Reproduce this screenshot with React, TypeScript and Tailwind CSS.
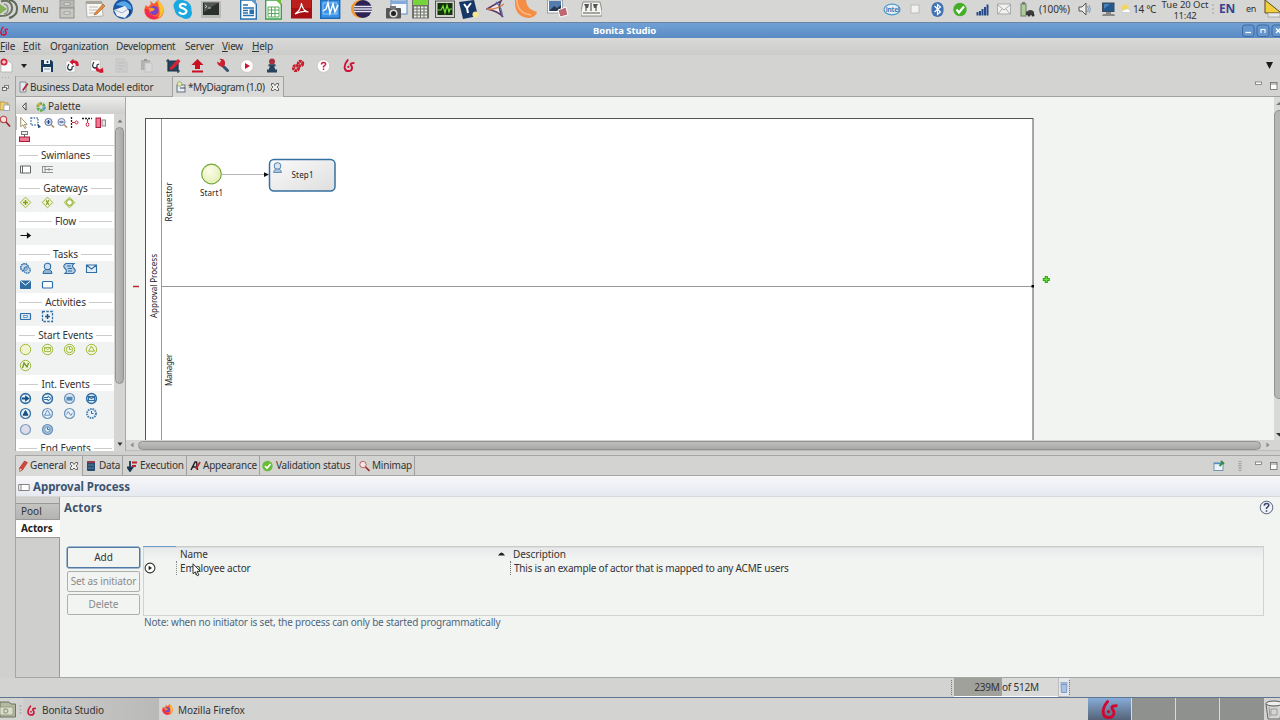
import React from "react";

type IcProps = { w: number; h: number; className?: string; children: React.ReactNode };

function Ic({ w, h, className = "", children }: IcProps) {
  return (
    <svg width={w} height={h} viewBox={`0 0 ${w} ${h}`} fill="none" className={`block shrink-0 ${className}`}>
      {children}
    </svg>
  );
}

function T({ className = "", children }: { className?: string; children: React.ReactNode }) {
  return <span className={`block shrink-0 whitespace-nowrap ${className}`}>{children}</span>;
}

function Bonita({ w, h, className = "", color = "#cf1238" }: { w: number; h: number; className?: string; color?: string }) {
  return (
    <svg width={w} height={h} viewBox="0 0 12 14" fill="none" className={`block shrink-0 ${className}`}>
      <path d="M4.600 1.200C2.600 3.500 1.200 6 1.300 9c.2 2.800 2 4 3.900 4 2.400 0 4.100-1.500 4.100-3.800 0-1.800-2.100-2.400-1.500-4 .4-.9 1.700-1 3.200-1" stroke={color} strokeWidth="2.100" strokeLinecap="round" />
      <circle cx="5.300" cy="8.500" r="1.200" fill={color} />
    </svg>
  );
}

function Firefox({ s, className = "" }: { s: number; className?: string }) {
  return (
    <svg width={s} height={s} viewBox="0 0 20 20" className={`block shrink-0 ${className}`}>
      <path d="M2 5 4 7 7 4 6 1 10 4 14 0 18 5Q22 13 16 18 9 22 3 17-2 12 2 5Z" fill="#fb5a2c" />
      <path d="M13 0q6 4 6.500 10-.5 6-6 9 3-4 2-9-1-5-2.500-10Z" fill="#ffc52e" />
      <path d="M1 9q0 8 7 10 4 .5 7-2Q5 17 4 9Z" fill="#f0285a" />
      <circle cx="10" cy="10.500" r="4.600" fill="#7a43c8" />
      <path d="M5 8q3-1 6 1l-2 2q-2 0-3 1Z" fill="#ff9a2e" />
    </svg>
  );
}

function TopPanel() {
  return (
    <div className="flex h-[22px] items-start overflow-hidden bg-[#d6d6d5] text-[10px] text-[#333]">
      <Ic w={19} h={20}>
        <path d="M0 4 7 9 0 14Z" fill="#87b158" />
        <path d="M1 1.500Q8-1 11 4q3 6-2 10-3 2-9 2" stroke="#69745f" strokeWidth="2" />
        <path d="M9 0q8 1 8 9 0 7-8 9" stroke="#5d6858" strokeWidth="2" />
        <path d="M4 4q4 1 4 5t-4 5" stroke="#8a9284" strokeWidth="1.500" />
      </Ic>
      <T className="ml-[3px] w-[37px] leading-[18px]">Menu</T>
      <Ic w={16} h={19}>
        <rect x="1" width="14" height="8" fill="#b9b9b4" stroke="#999" />
        <rect x="1" y="8" width="14" height="10" fill="#c7c7c2" stroke="#8d8d89" />
        <path d="M5 3h6v2H5zM5 12h6v2H5z" fill="#f5f5f5" stroke="#777" strokeWidth=".6" />
      </Ic>
      <Ic w={21} h={19} className="ml-[10px]">
        <path d="M1 2h16l1 14-16 1Z" fill="#f8f7f2" stroke="#999" strokeWidth=".7" />
        <path d="M1 1h16v3H1z" fill="#aaa69c" />
        <path d="M4 7h9M4 10h8M4 13h9" stroke="#aaa" strokeWidth=".8" />
        <path d="m10 13 8-9 2 2-8 8-3 1Z" fill="#e8893b" stroke="#8b4b1c" strokeWidth=".5" />
      </Ic>
      <Ic w={22} h={20} className="ml-[6px]">
        <circle cx="11" cy="9" r="10" fill="#1b57a6" />
        <path d="M4 5q8-8 15 1l1 6q-5-6-16-7Z" fill="#58a6e6" />
        <path d="M2 10 13 6l5 6-5 6-8-2Z" fill="#edf1f5" />
        <path d="m3 10 7 3 6-4" stroke="#9fb0c4" />
        <path d="m17 9 3 1-3 6Z" fill="#123c80" />
      </Ic>
      <Firefox s={20} className="ml-[10px]" />
      <Ic w={20} h={20} className="ml-[9px]">
        <circle cx="7" cy="6" r="6.500" fill="#1ba7e0" />
        <circle cx="13" cy="13" r="6" fill="#1ba7e0" />
        <circle cx="10" cy="9" r="8.500" fill="#1ba7e0" />
        <path d="M13.500 5.500Q10 2.500 7 5c-1.500 3.500 6.500 3 6.500 6.500-1 3-5 3.500-7.500.5" stroke="#fff" strokeWidth="2.200" />
      </Ic>
      <Ic w={20} h={19} className="ml-[8px]">
        <rect x="0" y="1" width="20" height="17" fill="#b8b8b4" />
        <rect x="2" y="2.500" width="16" height="12.500" fill="#2b302f" />
        <path d="M3 3h14L3 12Z" fill="#4e5553" />
        <path d="m4 5 2 1.500L4 8M7 8h3" stroke="#e5e5e5" strokeWidth=".8" />
      </Ic>
      <Ic w={17} h={20} className="ml-[19px]">
        <path d="M.7 0h11l4.600 4v15H.7Z" fill="#fff" stroke="#2671ae" strokeWidth="1.400" />
        <path d="M11 0h5v5Z" fill="#5b9bd0" />
        <path d="M3 5h5M3 8h11M3 10.500h5M3 13h5M3 15.500h11" stroke="#2671ae" strokeWidth="1.300" />
        <rect x="9.500" y="9.500" width="4.500" height="4.500" fill="#2671ae" />
      </Ic>
      <Ic w={17} h={20} className="ml-[8px]">
        <path d="M.7 0h11l4.600 4v15H.7Z" fill="#fff" stroke="#35a24a" strokeWidth="1.400" />
        <path d="M11 0h5v5Z" fill="#72bd3d" />
        <path d="M3 7h11v10H3zM3 10h11M3 13.500h11M6.500 7v10M10 7v10" stroke="#58a95a" />
      </Ic>
      <Ic w={21} h={19} className="ml-[9px]">
        <rect width="21" height="18.500" fill="#a80f12" />
        <rect x="1" y="0" width="19" height="8" fill="#bb201f" />
        <path d="M4 14Q10 10 10.500 3q1 8 7 9-6-2-13.500 2Z" stroke="#fff" strokeWidth="1.200" />
      </Ic>
      <Ic w={21} h={19} className="ml-[8px]">
        <rect x=".7" y="0" width="19" height="18.300" fill="#3a92e6" stroke="#1f68b5" strokeWidth="1.400" />
        <path d="M3 3h14v11H3z" stroke="#b9dcfa" strokeWidth=".7" />
        <path d="m3 11 3-2 2-6 2 10 3-9 2 8 3-7" stroke="#fff" strokeWidth="1.500" />
      </Ic>
      <Ic w={21} h={19} className="ml-[10px]">
        <circle cx="9" cy="9" r="9" fill="#f3992b" />
        <circle cx="12" cy="9" r="9" fill="#2c2255" />
        <path d="M3 6.500h18M3 9h18M3 11.500h18" stroke="#e6e5f0" strokeWidth="1.300" />
      </Ic>
      <Ic w={22} h={20} className="ml-[14px]">
        <rect x="5" y="0" width="16" height="14" fill="#f4f7fb" stroke="#5b89c7" />
        <path d="M5 1h16v3H5z" fill="#86aadb" />
        <rect x="0" y="8" width="15" height="10.500" rx="1" fill="#555" />
        <path d="M4 6h6v3H4z" fill="#777" />
        <circle cx="7.500" cy="13.500" r="4" fill="#ddd" />
        <circle cx="7.500" cy="13.500" r="2.500" fill="#222" />
      </Ic>
      <Ic w={19} h={19} className="ml-[3px]">
        <rect x="1" y="0" width="17" height="18.500" fill="#6e706a" />
        <rect x="2" y="0" width="15" height="5" fill="#77d33a" />
        <path d="M3 7.500h13M3 10.500h13M3 13.500h13M3 16.500h13" stroke="#ecece8" strokeWidth="2" strokeDasharray="2.500 1" />
      </Ic>
      <Ic w={20} h={19} className="ml-[5px]">
        <rect x=".5" y="1" width="19" height="16.500" fill="#d2d2cc" stroke="#555" />
        <rect x="2.500" y="3" width="15" height="12" fill="#15320f" />
        <path d="m3 10 3 0 2-4 2 7 2-8 2 7 1-3h2" stroke="#73e337" strokeWidth="1.200" />
      </Ic>
      <Ic w={21} h={20} className="ml-[4px]">
        <path d="m0 2 15-2 4 16-15 3Z" fill="#153667" />
        <path d="m5 4 3 4 4-5M8 8l1 5" stroke="#fff" strokeWidth="2" />
        <circle cx="16.500" cy="14.500" r="3" fill="#f8e58c" />
      </Ic>
      <Ic w={20} h={20} className="ml-[6px]">
        <path d="M1 9 15 1Q11 8 17 17 12 11 1 9Z" fill="#f1ece9" stroke="#593766" strokeWidth="1.500" />
        <path d="M1 9q9 1 17-5" stroke="#db813f" strokeWidth="1.500" />
        <path d="M10 2q7 7 6 15" stroke="#5272ab" strokeWidth="1.200" />
      </Ic>
      <Ic w={26} h={20} className="ml-[7px]">
        <path d="M2 0h11q0 9 11 12-1 5-8 6Q1 17 2 0Z" fill="#f68d45" />
        <path d="M4 0q0 13 14 15" stroke="#ffb985" strokeWidth="1.500" />
      </Ic>
      <Ic w={22} h={20} className="ml-[8px]">
        <rect x=".5" y="0" width="15" height="13" fill="#fff" stroke="#9ba1a8" />
        <rect x="2" y="1" width="12" height="10" fill="#547daf" />
        <path d="m2 11 5-5 3 2 4-3v6Z" fill="#273a50" />
        <path d="m11 10 8-3 2 8-8 2Z" fill="#bd6873" stroke="#fff" />
      </Ic>
      <Ic w={21} h={18} className="ml-[12px]">
        <path d="M2 2h17l2 9v5H0v-5Z" fill="#f4f4ef" stroke="#777" strokeWidth=".8" />
        <path d="M3 4h5l-1 4H5ZM12 4h5l-2 4h-2Z" fill="#555" />
        <path d="M5 7v4M10 3v8M15 7v4M2 13h17" stroke="#555" strokeWidth="1.200" />
      </Ic>

      <Ic w={18} h={19} className="ml-auto">
        <ellipse cx="9" cy="9.500" rx="8" ry="5.300" fill="#e3eef4" stroke="#499cd0" strokeWidth="1.200" />
        <text x="2.800" y="12" fontSize="6.500" fontWeight="700" fill="#347fb8" fontFamily="Noto Sans, sans-serif">intel</text>
      </Ic>
      <Ic w={10} h={18} className="ml-[9px]">
        <rect x="1" y="5" width="8" height="8" fill="#f2f2f2" stroke="#bbb" />
      </Ic>
      <Ic w={13} h={18} className="ml-[11px]">
        <rect x=".5" y="2" width="12" height="15" rx="6" fill="#3f71b3" />
        <path d="m3.500 6 6 6-3 2.500v-10l3 2.500-6 5" stroke="#fff" strokeWidth="1.200" />
      </Ic>
      <Ic w={14} h={18} className="ml-[9px]">
        <circle cx="7" cy="9.500" r="6.700" fill="#45ad28" />
        <path d="m3.500 9.500 2.500 3 5-6" stroke="#fff" strokeWidth="2.200" />
      </Ic>
      <Ic w={13} h={18} className="ml-[9px]">
        <path d="M1.500 12v3.500M4 11v4.500M6.500 9v6.500M9 7v8.500M11.500 4.500v11" stroke="#284b89" strokeWidth="2" />
      </Ic>
      <Ic w={14} h={18} className="ml-[8px]">
        <rect x=".5" y="4" width="13" height="10" fill="#f2f2f2" stroke="#aaa" />
        <path d="m1 5 6 5 6-5M1 14l4-5M13 14 9 9" stroke="#aaa" />
      </Ic>
      <Ic w={15} h={18} className="ml-[9px]">
        <rect x="1" y="4" width="5" height="12" fill="#a9cf94" stroke="#777" />
        <path d="M2 2h3v2H2z" fill="#777" />
        <path d="M6 12q5-4 8 0v3H6Z" fill="#3c3e3c" />
        <circle cx="9" cy="15" r="1.500" fill="#333" />
        <circle cx="13" cy="15" r="1.500" fill="#333" />
      </Ic>
      <T className="ml-[4px] w-[39px] leading-[18px] tracking-[-0.1px]">(100%)</T>
      <Ic w={13} h={18}>
        <path d="M1 7h3l4-4v12l-4-4H1Z" fill="#ededeb" stroke="#555" />
        <path d="M9.500 6q2 3 0 6M11 5q3 4 0 8" stroke="#7d98bb" />
      </Ic>
      <Ic w={15} h={18} className="ml-[10px]">
        <rect x="1.500" y="3" width="11.500" height="8.500" fill="#23588f" stroke="#3a4b5c" />
        <path d="M3 4h6L3 9Z" fill="#4a80b8" />
        <path d="M5 12h5v2h3l1 2H1l1-2h3Z" fill="#888" />
      </Ic>
      <Ic w={10} h={18} className="ml-[5px]">
        <circle cx="4" cy="8" r="3.500" fill="#f3d75d" />
        <path d="M1 12.500q0-3 3-3 3-2 5 1 1 2-1 2Z" fill="#fff" stroke="#bbb" strokeWidth=".5" />
      </Ic>
      <T className="ml-[2px] w-[27px] leading-[18px] tracking-[-0.300px]">14 °C</T>
      <div className="flex h-[22px] w-[50px] shrink-0 flex-col items-center text-[9.500px] whitespace-nowrap">
        <span className="-mt-px h-[11px] leading-[11px] tracking-[-0.050px]">Tue 20 Oct</span>
        <span className="h-[11px] leading-[11px]">11:42</span>
      </div>
      <Ic w={4} h={18} className="ml-[1px]">
        <path d="M2 4v11" stroke="#bbb" strokeWidth="2" strokeDasharray="2 2" />
      </Ic>
      <T className="ml-[4px] w-[27px] text-[12px] leading-[18px] font-bold text-[#3d4390]">EN</T>
      <T className="w-[18px] text-[9px] leading-[18px]">en</T>
      <Ic w={16} h={20}>
        <path d="M1 0v13h15" fill="#f2cf3b" stroke="#5a4b16" />
        <path d="m1 0 15 12" stroke="#5a4b16" />
        <path d="M4 13h12v4H4z" fill="#e8e8e8" stroke="#888" strokeWidth=".6" />
      </Ic>
    </div>
  );
}

function TitleBar() {
  return (
    <div className="flex h-[16px] items-center border-t border-[#6c84a0] bg-gradient-to-b from-[#70a0d5] to-[#5a8bc4]">
      <Bonita w={8} h={10} />
      <T className="ml-[585px] w-[64px] text-[9.500px] leading-[14px] font-bold tracking-[-0.050px] text-white">Bonita Studio</T>
      <Ic w={38} h={14} className="ml-auto">
        <rect x="0.500" y="1" width="11.500" height="11.500" rx="2.500" stroke="#41699b" fill="#6496cf" />
        <rect x="15" y="1" width="12" height="11.500" rx="2.500" stroke="#41699b" fill="#6496cf" />
        <rect x="30" y="1" width="12" height="11.500" rx="2.500" stroke="#41699b" fill="#6496cf" />
        <path d="M3.500 8.500h5.500" stroke="#fff" strokeWidth="1.300" />
        <path d="M19 9V5.500h4V9" stroke="#fff" strokeWidth="1.100" />
        <path d="m34 4.500 4.500 4.500m0-4.500L34 9" stroke="#fff" strokeWidth="1.300" />
      </Ic>
    </div>
  );
}

function MenuBar() {
  return (
    <div className="flex h-[17px] items-center bg-gradient-to-b from-[#d9d9d8] to-[#cbcbca] text-[10px] text-[#333]">
      <T className="w-[23px]"><u>F</u>ile</T>
      <T className="w-[27px] tracking-[0px]"><u>E</u>dit</T>
      <T className="w-[66px]">Organization</T>
      <T className="w-[69px] tracking-[-0.330px]">Development</T>
      <T className="w-[37px]">Server</T>
      <T className="w-[30px]"><u>V</u>iew</T>
      <T><u>H</u>elp</T>
    </div>
  );
}

function ToolBar() {
  return (
    <div className="flex h-[22px] items-center border-b border-[#b2b2b2] bg-[#d3d3d2]">
      <Ic w={14} h={16}>
        <path d="M1 3h8l3 3v8H1Z" fill="#fafafa" stroke="#aaa" strokeWidth=".7" />
        <circle cx="4" cy="4" r="3.500" fill="#d6293b" />
        <path d="M4 2v4M2 4h4" stroke="#fff" />
      </Ic>
      <Ic w={6} h={4} className="ml-[7px]"><path d="M0 0h6L3 4Z" fill="#222" /></Ic>
      <Ic w={14} h={14} className="ml-[13px]">
        <path d="M1 1h10l2 2v10H1Z" fill="#173b5c" />
        <path d="M4 1h6v4H4zM3 8h8v5H3z" fill="#eef1f4" />
        <path d="M7.500 2v2" stroke="#173b5c" strokeWidth="1.500" />
        <path d="M4 10h6" stroke="#8899a8" />
      </Ic>
      <Ic w={14} h={16} className="ml-[11px]">
        <path d="M1 3h9v11H1Z" fill="#fff" stroke="#bbb" strokeWidth=".6" />
        <path d="M4 6q-2 3-1 5 2 2 4 0V9l2-1" stroke="#253441" strokeWidth="1.200" />
        <path d="M13.500 8q1-6-5-5.500V.8L4.500 4 8 7V5.200q3-.7 3 2.800Z" fill="#d5152f" />
      </Ic>
      <Ic w={14} h={16} className="ml-[11px]">
        <path d="M1 2h9v11H1Z" fill="#fff" stroke="#bbb" strokeWidth=".6" />
        <path d="M4 4q-2 3-1 5 2 2 4 0V7l2-1" stroke="#253441" strokeWidth="1.200" />
        <path d="M5.500 9.500q0 5 4 4.200V15l4-.5-.7-5-1.500 1.200q-1 1-2.500.5l-.5-1.700Z" fill="#d5152f" />
      </Ic>
      <Ic w={13} h={15} className="ml-[11px]">
        <path d="M1 1h8l3 3v10H1Z" fill="#cdcdcd" stroke="#c4c4c4" />
        <path d="M3 5h7M3 8h7M3 11h5" stroke="#bdbdbd" />
      </Ic>
      <Ic w={13} h={15} className="ml-[12px]">
        <path d="M1 2h9v10H1Z" fill="#b2b2b2" />
        <path d="M4 1h3v2H4z" fill="#999" />
        <path d="M5 5h7v9H5z" fill="#d9d9d9" stroke="#c4c4c4" />
      </Ic>
      <Ic w={15} h={16} className="ml-[13px]">
        <rect x="2" y="3" width="10" height="10" fill="#25445e" />
        <path d="M2 1v12h12M0 3h12v12" stroke="#19324a" strokeWidth="1.200" />
        <path d="M3.500 12 4.500 9 12 1l2.500 2.200L7 11Z" fill="#d92332" />
      </Ic>
      <Ic w={13} h={16} className="ml-[10px]">
        <path d="m6.500 1 6 6H9v4H4V7H.5ZM1 12.500h11v2H1Z" fill="#c9101f" />
      </Ic>
      <Ic w={14} h={15} className="ml-[12px]">
        <path d="m6 7 5.500 5.500" stroke="#36536d" strokeWidth="3" strokeLinecap="round" />
        <path d="M1 3.500 4 5l1-3-2-1q5-1 6 3v2.500L6.500 9q-5-1-5.500-5.500Z" fill="#cc1f30" />
      </Ic>
      <Ic w={14} h={14} className="ml-[10px]">
        <circle cx="7" cy="7" r="6.400" fill="#fff" stroke="#ccb6b8" strokeWidth=".7" />
        <path d="M5 4v6l5-3Z" fill="#cf152d" />
      </Ic>
      <Ic w={12} h={15} className="ml-[12px]">
        <circle cx="6" cy="3.500" r="3" fill="#a8313c" />
        <path d="M2.500 6.200h7v2H8.200l1 3.300h1.800v3H1v-3h1.800l1-3.300H2.500Z" fill="#27445e" />
      </Ic>
      <Ic w={14} h={14} className="ml-[13px]">
        <circle cx="9.500" cy="4.500" r="2.200" stroke="#c61c2c" strokeWidth="3" strokeDasharray="2.200 .5" />
        <circle cx="5" cy="9" r="2.500" stroke="#c61c2c" strokeWidth="3.200" strokeDasharray="2.400 .5" />
      </Ic>
      <Ic w={14} h={14} className="ml-[12px]">
        <circle cx="6.500" cy="7" r="6.300" fill="#fff" stroke="#c9bbbd" strokeWidth=".7" />
        <path d="M4.500 5.500q0-2 2-2 2.500 0 2 2Q8 6.500 6.500 7.500v1M6.500 9.500v1.500" stroke="#c41b3d" strokeWidth="1.500" />
      </Ic>
      <Bonita w={12} h={13} className="ml-[12px]" />
      <Ic w={7} h={7} className="mr-[7px] ml-auto"><path d="M0 0h7L3.500 7Z" fill="#1c1c1c" /></Ic>
    </div>
  );
}

function CloseX({ className = "" }: { className?: string }) {
  return (
    <Ic w={8} h={8} className={className}>
      <path d="M.5.5h2L4 2.500 5.500.5h2v2L6 4l1.500 1.500v2h-2L4 6 2.500 7.500h-2v-2L2 4 .5 2.500Z" fill="#eee" stroke="#444" strokeWidth=".8" />
    </Ic>
  );
}

function MinMax() {
  return (
    <Ic w={25} h={10} className="ml-auto">
      <rect x="0.500" y="1" width="6" height="2.500" fill="#fff" stroke="#777" strokeWidth=".8" />
      <rect x="15.500" y="1.500" width="6.500" height="7" fill="#fff" stroke="#666" strokeWidth=".8" />
      <path d="M15.500 3h6.500" stroke="#666" strokeWidth=".8" />
    </Ic>
  );
}

function EditorTabs() {
  return (
    <div className="flex h-[21px] bg-[#d3d3d2] text-[10px] text-[#333]">
      <div className="flex w-[15px] shrink-0 flex-col items-start">
        <Ic w={14} h={20}>
          <path d="M2 1.500h9" stroke="#aaa" strokeDasharray="1 2" />
          <rect x="4.500" y="9.500" width="4" height="3" fill="#eee" stroke="#666" strokeWidth=".8" />
          <rect x="2.500" y="11.500" width="4" height="3" fill="#eee" stroke="#555" strokeWidth=".8" />
        </Ic>
      </div>
      <div className="flex flex-1 items-center border-b border-l border-[#a0a0a0]">
        <div className="flex h-full w-[156px] shrink-0 items-center border-t border-[#bbb] pt-[1px] pl-[3px]">
          <Ic w={10} h={12}>
            <path d="M1 1h6v10H1Z" fill="#e6eaf0" stroke="#6b7683" strokeWidth=".8" />
            <path d="m3 9 5-7 1.500 1-5 7Z" fill="#b02735" />
          </Ic>
          <T className="ml-[1px]">Business Data Model editor</T>
        </div>
        <div className="flex h-[21px] w-[112px] shrink-0 items-center self-start border-x border-t border-[#a0a0a0] bg-[#dadad9] pl-[3px]">
          <Ic w={10} h={12}>
            <rect x="1" y="4" width="8" height="7" fill="#e9edf2" stroke="#567" strokeWidth=".9" />
            <circle cx="3.500" cy="3" r="2.300" fill="#e6ecb0" stroke="#8f9a4c" strokeWidth=".7" />
            <path d="M4 7h5" stroke="#345" />
          </Ic>
          <T className="ml-[2px] w-[83px] tracking-[-0.400px]">*MyDiagram (1.0)</T>
          <CloseX />
        </div>
        <MinMax />
      </div>
    </div>
  );
}

const G = "#9db93f";
const B = "#2f6da5";

const Shapes: Record<string, React.ReactNode> = {
  pool: <path d="M1.500 3h10v7h-10zM3.500 3v7" stroke="#555" fill="#fff" strokeWidth=".9" />,
  lane: <path d="M1 3.500h11M1 9.500h11M1.500 3v7M4 3v7M4 6.500h8M8 5v3" stroke="#888" strokeWidth=".9" />,
  gplus: <><path d="m6.500 1.200 5.300 5.300-5.300 5.300-5.300-5.300Z" fill="#eef3cf" stroke={G} /><path d="M6.500 4v5M4 6.500h5" stroke="#809c25" strokeWidth="1.400" /></>,
  gx: <><path d="m6.500 1.200 5.300 5.300-5.300 5.300-5.300-5.300Z" fill="#eef3cf" stroke={G} /><path d="m5.200 4.200 2.600 4.600M7.800 4.200 5.200 8.800" stroke="#809c25" strokeWidth="1.200" /></>,
  gcirc: <><path d="m6.500 1.200 5.300 5.300-5.300 5.300-5.300-5.300Z" fill="#dfe9a8" stroke={G} /><circle cx="6.500" cy="6.500" r="2.900" fill="#fff" stroke={G} strokeWidth="1.200" /></>,
  arrow: <path d="M1.500 6.500h8M8.500 4.500l2.700 2-2.700 2Z" stroke="#111" fill="#111" strokeWidth="1.200" />,
  gear: <><circle cx="5.500" cy="5.500" r="3.800" stroke={B} strokeWidth="1.500" strokeDasharray="1.700 .6" fill="#c8dbec" /><circle cx="8" cy="8" r="3.200" stroke={B} strokeWidth="1.300" strokeDasharray="1.600 .6" fill="#c8dbec" /><circle cx="7" cy="7" r="1.300" fill="#fff" stroke={B} strokeWidth=".8" /></>,
  user: <><circle cx="6.500" cy="4.500" r="3.200" fill="#cfdfee" stroke={B} strokeWidth="1.100" /><path d="M2 11.500q0-3 2.500-4h4q2.500 1 2.500 4Z" fill="#8fb3d3" stroke={B} /></>,
  script: <path d="M3 1.500h8q-3 2.500 0 5t-1 5H2q3-2.500 0-5t1-5ZM4 4h4M5 6.500h4M5 9h4" fill="#b7d0e6" stroke={B} strokeWidth="1.100" />,
  mail: <path d="M1.500 3h10v7.500h-10zM1.500 3l5 4 5-4" fill="#e3edf6" stroke={B} strokeWidth="1.100" />,
  mailf: <><path d="M1.500 3h10v7.500h-10z" fill={B} stroke={B} /><path d="m1.500 3 5 4 5-4" stroke="#fff" /></>,
  rect: <rect x="1.500" y="3.500" width="10" height="6.500" rx="1" fill="#fff" stroke={B} strokeWidth="1.200" />,
  act: <><rect x="1.500" y="3.500" width="10" height="6" rx=".7" fill="#dbe7f2" stroke={B} strokeWidth="1.200" /><rect x="4.800" y="5.500" width="3.400" height="2" fill="#fff" stroke={B} strokeWidth=".7" /></>,
  sub: <><rect x="1.500" y="1.500" width="10" height="10" stroke={B} strokeWidth="1.300" strokeDasharray="2.500 1.300" /><path d="M6.500 4v5M4 6.500h5" stroke="#205b95" strokeWidth="1.600" /></>,
  start: <circle cx="6.500" cy="6.500" r="5.200" fill="#f2f4cd" stroke={G} />,
  smail: <><circle cx="6.500" cy="6.500" r="5.200" fill="#f2f5dc" stroke={G} /><path d="M3.500 4.500h6v4h-6zl3 2 3-2" stroke={G} strokeWidth=".9" /></>,
  stime: <><circle cx="6.500" cy="6.500" r="5.200" fill="#f2f5dc" stroke={G} /><circle cx="6.500" cy="6.500" r="3.200" stroke={G} /><path d="M6.500 4v2.500h2" stroke={G} /></>,
  ssig: <><circle cx="6.500" cy="6.500" r="5.200" fill="#f2f5dc" stroke={G} /><path d="m6.500 3 3 5.200h-6Z" stroke={G} /></>,
  serr: <><circle cx="6.500" cy="6.500" r="5.200" fill="#f2f5dc" stroke={G} /><path d="m3.500 9 1.500-5 3 4L9.500 4" stroke="#6f9620" strokeWidth="1.300" /></>,
  iarr: <><circle cx="6.500" cy="6.500" r="4.900" fill="#e9f1f8" stroke={B} strokeWidth="1.600" /><path d="M3 6.500h4.500M7 5l2 1.500L7 8Z" stroke="#174f80" fill="#174f80" strokeWidth="1.800" /></>,
  iarro: <><circle cx="6.500" cy="6.500" r="4.900" fill="#e9f1f8" stroke={B} strokeWidth="1.600" /><path d="M3 5.500h4V4l3 2.500L7 9V7.500H3" stroke={B} /></>,
  imsg: <><circle cx="6.500" cy="6.500" r="5" fill="#dce8f3" stroke="#6792bb" strokeWidth="1.200" /><rect x="3.500" y="4.800" width="6" height="3.800" fill="#5688b6" /></>,
  imail: <><circle cx="6.500" cy="6.500" r="4.900" fill="#dce8f3" stroke={B} strokeWidth="1.500" /><path d="M3.500 4.500h6v4h-6zl3 2 3-2" stroke={B} strokeWidth="1.100" /></>,
  isig: <><circle cx="6.500" cy="6.500" r="5" fill="#e9f1f8" stroke={B} strokeWidth="1.200" /><path d="m6.500 3.500 2.500 4.700h-5Z" fill="#174f80" stroke="#174f80" /></>,
  isigo: <><circle cx="6.500" cy="6.500" r="5" fill="#e9f1f8" stroke="#6792bb" strokeWidth="1.200" /><path d="m6.500 3 3 5.200h-6Z" stroke="#6792bb" /></>,
  ierr: <><circle cx="6.500" cy="6.500" r="5" fill="#e9f1f8" stroke="#6792bb" strokeWidth="1.200" /><path d="m3.500 7.500 1.800-3 2.500 4L9.500 6" stroke="#6792bb" /></>,
  itime: <><circle cx="6.500" cy="6.500" r="4.500" fill="#e9f1f8" stroke="#4f82b2" strokeWidth="2" strokeDasharray="1.600 .8" /><path d="M6.500 4v2.500h2" stroke={B} /></>,
  inone: <circle cx="6.500" cy="6.500" r="5" fill="#dcdcec" stroke="#7d9cc0" strokeWidth="1.200" />,
  iclock: <><circle cx="6.500" cy="6.500" r="5" fill="#aac4dd" stroke="#6792bb" strokeWidth="1.200" /><circle cx="6.500" cy="6.500" r="2.700" fill="#e9f1f8" stroke="#6792bb" /><path d="M6.500 4.500v2h2" stroke={B} /></>,
};

function Section({ title, rows }: { title: string; rows: string[][] }) {
  return (
    <div className="shrink-0">
      <div className="flex h-[16px] items-center pt-[3px] pr-[2px] pl-[3px]">
        <div className="h-px flex-1 bg-[#cbcbcb]" />
        <T className="px-[3px] text-[10px] leading-[13px] tracking-[-0.100px] text-[#333]">{title}</T>
        <div className="h-px flex-1 bg-[#cbcbcb]" />
      </div>
      <div className="bg-[#f1f3f2] pb-[1.300px]">
        {rows.map((r, i) => (
          <div key={i} className="flex h-[15.600px] items-center gap-[9px] pl-[3px]">
            {r.map((k) => (
              <Ic key={k} w={13} h={13}>{Shapes[k]}</Ic>
            ))}
          </div>
        ))}
      </div>
    </div>
  );
}

function Palette() {
  return (
    <div className="flex w-[111px] shrink-0 flex-col border-x border-[#a9a9a9] bg-white">
      <div className="flex h-[17px] shrink-0 items-center bg-gradient-to-b from-[#ececeb] to-[#cfcfce] pt-[2px] pl-[5px] text-[10px] text-[#333]">
        <Ic w={6} h={9}><path d="M5 .8v7.400L1.500 4.500Z" fill="#eee" stroke="#333" strokeWidth=".9" /></Ic>
        <Ic w={10} h={10} className="ml-[9px]">
          <circle cx="5" cy="5" r="3.300" stroke="#5fae4b" strokeWidth="2.800" strokeDasharray="2.600 .8" />
          <path d="M1.500 3.500 4 1.500" stroke="#e2a83a" strokeWidth="2.500" />
          <path d="m7 8 2-3" stroke="#58a3cf" strokeWidth="2.500" />
        </Ic>
        <T className="ml-[2px] tracking-[0px]">Palette</T>
      </div>
      <div className="flex min-h-0 flex-1">
        <div className="flex w-[98px] shrink-0 flex-col overflow-hidden">
          <div className="h-[32px] shrink-0 border-b border-[#cfcfcf] pt-[1px]">
            <div className="flex h-[15px] items-center">
              <Ic w={13} h={14} className="border-l border-[#bbb]">
                <path d="M4 1v10l2.500-2 2 4 1.500-1-2-3.500h3Z" fill="#fff" stroke="#8c8352" strokeWidth=".9" />
              </Ic>
              <Ic w={13} h={13}>
                <path d="M2 2h7v7H2z" stroke="#4a78a8" strokeWidth="1.400" strokeDasharray="1.500 1.200" />
                <path d="M9 8v4l3-1Z" fill="#1d456e" />
              </Ic>
              <Ic w={13} h={13}>
                <circle cx="6.500" cy="6" r="3.600" fill="#dbe5f4" stroke="#5d6fa0" />
                <path d="M4.500 6h4M6.500 4v4" stroke="#2f4680" strokeWidth="1.200" />
                <path d="m9.500 9 2.500 2.500" stroke="#b08b54" strokeWidth="1.600" />
              </Ic>
              <Ic w={13} h={13}>
                <circle cx="6.500" cy="6" r="3.600" fill="#dbe5f4" stroke="#7683a6" />
                <path d="M4.500 6h4" stroke="#2f4680" strokeWidth="1.200" />
                <path d="m9.500 9 2.500 2.500" stroke="#b08b54" strokeWidth="1.600" />
              </Ic>
              <Ic w={13} h={13}>
                <path d="M3.500 1v11" stroke="#222" strokeWidth="1.300" strokeDasharray="2 1" />
                <path d="M4 6.500h3" stroke="#c33" />
                <circle cx="8.500" cy="6.500" r="1.500" stroke="#c4264c" />
              </Ic>
              <Ic w={13} h={13}>
                <path d="M1 2.500h10" stroke="#222" strokeWidth="1.300" strokeDasharray="2 1" />
                <path d="M6.500 3v3" stroke="#c33" />
                <ellipse cx="6.500" cy="8.500" rx="1.300" ry="2" stroke="#c4264c" />
              </Ic>
              <Ic w={13} h={13}>
                <rect x="2" y="2" width="4.500" height="9.500" fill="#f07891" stroke="#a91a3a" />
                <rect x="8" y="4" width="3.500" height="6" fill="#e6e6e6" stroke="#888" />
              </Ic>
            </div>
            <Ic w={13} h={13} className="ml-[2px]">
              <rect x="3.500" y="1.500" width="6" height="3" fill="#eee" stroke="#777" />
              <rect x="1.500" y="7" width="10" height="4.500" fill="#f07891" stroke="#a91a3a" />
              <path d="M6.500 5v2" stroke="#555" />
            </Ic>
          </div>
          <Section title="Swimlanes" rows={[["pool", "lane"]]} />
          <Section title="Gateways" rows={[["gplus", "gx", "gcirc"]]} />
          <Section title="Flow" rows={[["arrow"]]} />
          <Section title="Tasks" rows={[["gear", "user", "script", "mail"], ["mailf", "rect"]]} />
          <Section title="Activities" rows={[["act", "sub"]]} />
          <Section title="Start Events" rows={[["start", "smail", "stime", "ssig"], ["serr"]]} />
          <Section title="Int. Events" rows={[["iarr", "iarro", "imsg", "imail"], ["isig", "isigo", "ierr", "itime"], ["inone", "iclock"]]} />
          <Section title="End Events" rows={[["start"]]} />
        </div>
        <div className="flex flex-1 flex-col items-center bg-[#d5d5d4]">
          <Ic w={8} h={13}><path d="M1.500 8.500h5L4 5.500Z" fill="#777" /></Ic>
          <div className="h-[257px] w-[9px] rounded-[5px] border border-[#929292] bg-gradient-to-r from-[#bdbdbc] to-[#a9a9a8]" />
          <div className="flex-1" />
          <Ic w={8} h={12}><path d="M1.500 3.500h5L4 7Z" fill="#333" /></Ic>
        </div>
      </div>
    </div>
  );
}

function Diagram() {
  return (
    <svg width="1148" height="343" viewBox="126 97 1148 343" fill="none" className="block" fontFamily="Noto Sans, sans-serif">
      <defs>
        <linearGradient id="task" x1="0" y1="0" x2="1" y2="1">
          <stop offset="0" stopColor="#fbfbfb" />
          <stop offset="1" stopColor="#dedede" />
        </linearGradient>
        <radialGradient id="ev" cx=".4" cy=".35" r=".7">
          <stop offset="0" stopColor="#fdfee8" />
          <stop offset="1" stopColor="#e3edb4" />
        </radialGradient>
      </defs>
      <rect x="145.500" y="118.500" width="887.500" height="340" fill="#fff" stroke="#555" />
      <path d="M161.500 119v322" stroke="#999" />
      <path d="M162 286.500h871" stroke="#999" />
      <rect x="1031.500" y="285" width="2.500" height="2.500" fill="#000" />
      <path d="M133 286.500h6" stroke="#c0272d" strokeWidth="1.500" />
      <path d="M1046.300 276v7M1042.800 279.500h7" stroke="#2fa516" strokeWidth="3.200" />
      <path d="M1046.300 277v5M1043.800 279.500h5" stroke="#6ee23f" strokeWidth="1.200" />
      <path d="M222 174.500h43" stroke="#b5b5b5" />
      <path d="M264 172.300v4.600l5-2.300Z" fill="#111" />
      <circle cx="211.500" cy="174" r="9.800" fill="url(#ev)" stroke="#74a83a" strokeWidth="1.200" />
      <rect x="269.500" y="159.500" width="65.500" height="31.500" rx="4.500" fill="url(#task)" stroke="#34709f" strokeWidth="1.500" />
      <circle cx="277.500" cy="166" r="3.200" fill="#dbe6f0" stroke="#6691b7" strokeWidth="1.100" />
      <path d="M273.500 172.500q.5-3 2.500-3.500h3q2 .5 2.500 3.500Z" fill="#a9c3da" stroke="#6691b7" />
      <g fontSize="8" fill="#222" letterSpacing="0">
        <text x="302.500" y="178" textAnchor="middle" textLength="22">Step1</text>
        <text x="211.500" y="195.500" textAnchor="middle" textLength="23">Start1</text>
        <text transform="translate(172 202) rotate(-90)" textAnchor="middle" textLength="39">Requestor</text>
        <text transform="translate(172 370) rotate(-90)" textAnchor="middle" textLength="32">Manager</text>
        <text transform="translate(157 286) rotate(-90)" textAnchor="middle" textLength="64">Approval Process</text>
      </g>
    </svg>
  );
}

function LeftTrim() {
  return (
    <div className="flex w-[15px] shrink-0 flex-col bg-[#d0d0cf]">
      <Ic w={12} h={14} className="mt-[2px]">
        <path d="M0 3h4l1 1h3v7H0Z" fill="#f0cf70" stroke="#a58a45" strokeWidth=".8" />
        <rect x="4" y="6" width="5.500" height="5.500" fill="#fff" stroke="#8e9db0" strokeWidth=".8" />
      </Ic>
      <Ic w={12} h={14} className="mt-[2px]">
        <circle cx="3.500" cy="4.500" r="3.200" fill="#f4dede" stroke="#b84444" strokeWidth="1.100" />
        <path d="m6 7 4 4.500" stroke="#992c2c" strokeWidth="1.800" />
      </Ic>
    </div>
  );
}

function Editor() {
  return (
    <div className="flex h-[354px]">
      <LeftTrim />
      <Palette />
      <div className="flex min-w-0 flex-1 flex-col bg-[#f2f4f2]">
        <div className="flex h-[343px]">
          <Diagram />
          <div className="flex flex-1 flex-col overflow-hidden bg-[#d9d9d8]">
            <Ic w={8} h={13}><path d="M2 8h7L5.500 5Z" fill="#777" /></Ic>
            <div className="h-[289px] w-[11px] rounded-[5px] border border-[#929292] bg-[#b6b6b5]" />
            <div className="flex-1" />
            <Ic w={8} h={11}><path d="M2 4h7L5.500 7.500Z" fill="#333" /></Ic>
          </div>
        </div>
        <div className="flex h-[11px] items-center border-b border-[#bbb] bg-[#d5d5d4]">
          <Ic w={12} h={10}><path d="M7.500 2.500v5L4.500 5Z" fill="#888" /></Ic>
          <div className="h-[9px] w-[1123px] rounded-[5px] border border-[#929292] bg-gradient-to-b from-[#bdbdbc] to-[#a9a9a8]" />
          <Ic w={12} h={10}><path d="M5.500 2.500v5l3-2.500Z" fill="#888" /></Ic>
        </div>
      </div>
    </div>
  );
}

function ViewTabs() {
  return (
    <div className="flex h-[21px] items-stretch border-t border-b border-[#a6a6a6] bg-[#d3d3d2] text-[10px] text-[#333]">
      <div className="-mb-px flex w-[67px] items-center border-r border-[#a0a0a0] bg-[#dadad9] pb-[1px] pl-[2px]">
        <Ic w={11} h={12}>
          <path d="m1.500 8 5-7 3 1.500-5 7.500-3 1.500Z" fill="#d6463a" stroke="#8b2a22" strokeWidth=".5" />
          <path d="m1 11.500 1-3 2 1Z" fill="#e9cfa3" />
        </Ic>
        <T className="ml-[1px] w-[40px] tracking-[-0.100px]">General</T>
        <CloseX />
      </div>
      <div className="flex w-[40px] items-center border-r border-[#a0a0a0] pl-[3px]">
        <Ic w={10} h={12}>
          <rect x="1" y="1" width="8" height="10" rx="1" fill="#254c70" />
          <path d="M1 2h8" stroke="#c0323c" strokeWidth="1.500" />
          <path d="M2 5h6M2 8h6" stroke="#597c9b" />
        </Ic>
        <T className="ml-[3px]">Data</T>
      </div>
      <div className="flex w-[64px] items-center border-r border-[#a0a0a0] pl-[4px]">
        <Ic w={10} h={12}>
          <path d="M3 1v8M3 11 0.500 7.500h5Z" stroke="#1b3854" fill="#1b3854" strokeWidth="1.800" />
          <path d="M5 2.500h5M5 6h4" stroke="#b82531" strokeWidth="2" />
        </Ic>
        <T className="ml-[3px]">Execution</T>
      </div>
      <div className="flex w-[73px] items-center border-r border-[#a0a0a0] pl-[3px]">
        <Ic w={11} h={12}>
          <path d="m1 10 4-8h1.500l1 8M3 7h4" stroke="#222" strokeWidth="1.500" />
          <path d="M6 9 10 2" stroke="#c02535" strokeWidth="1.700" />
        </Ic>
        <T className="ml-[2px]">Appearance</T>
      </div>
      <div className="flex w-[96px] items-center border-r border-[#a0a0a0] pl-[2px]">
        <Ic w={11} h={12}>
          <circle cx="5.500" cy="6" r="5.200" fill="#67bd38" />
          <path d="m3 6 2 2.300 3.500-4.300" stroke="#fff" strokeWidth="1.700" />
        </Ic>
        <T className="ml-[3px]">Validation status</T>
      </div>
      <div className="flex w-[59px] items-center border-r border-[#a0a0a0] pl-[3px]">
        <Ic w={11} h={12}>
          <circle cx="4" cy="4.500" r="3.200" fill="#f4e6e6" stroke="#bd6565" />
          <path d="m6.500 7 4 4" stroke="#a12f2f" strokeWidth="1.700" />
        </Ic>
        <T className="ml-[2px]">Minimap</T>
      </div>
      <div className="ml-auto flex items-center">
        <Ic w={12} h={12}>
          <rect x="1" y="3" width="9" height="7.500" fill="#e9f4fc" stroke="#7d93a6" />
          <path d="M1 3.500h7" stroke="#4e90ce" strokeWidth="1.400" />
          <path d="m6.500 6 3-3M8 1l3 3" stroke="#378b3c" strokeWidth="1.800" />
        </Ic>
        <Ic w={6} h={12} className="ml-[12px]">
          <circle cx="3" cy="2.500" r="1.200" fill="#fff" stroke="#666" strokeWidth=".6" />
          <circle cx="3" cy="6" r="1.200" fill="#fff" stroke="#666" strokeWidth=".6" />
          <circle cx="3" cy="9.500" r="1.200" fill="#fff" stroke="#666" strokeWidth=".6" />
        </Ic>
        <div className="ml-[12px]"><MinMax /></div>
      </div>
    </div>
  );
}

function ActorsPage() {
  return (
    <div className="flex min-w-0 flex-1 flex-col bg-[#f2f4f2]">
      <div className="flex h-[49px] items-start pt-[2px] pl-[4px]">
        <T className="text-[11.500px] leading-[17px] font-bold tracking-[0.200px] text-[#3d546e]">Actors</T>
        <Ic w={15} h={15} className="mt-[1px] mr-[6px] ml-auto">
          <circle cx="7.500" cy="7.500" r="6.300" fill="#f0f2f8" stroke="#5a6380" />
          <path d="M5.300 5.800q0-2.300 2.200-2.300 2.700 0 2.200 2.200Q9.200 6.700 7.500 8v1M7.500 10.200v1.600" stroke="#3c4668" strokeWidth="1.500" />
        </Ic>
      </div>
      <div className="flex">
        <div className="flex w-[83px] shrink-0 flex-col gap-[2.500px] pt-[1px] pl-[7px] text-center text-[10px]">
          <div className="h-[21px] w-[73px] rounded-[2px] border border-[#4e79a6] leading-[19px] tracking-[0px] text-[#333] ring-[0.500px] ring-[#4e79a6]">Add</div>
          <div className="h-[21px] w-[73px] rounded-[2px] border border-[#aeb0ae] leading-[19px] tracking-[-0.100px] whitespace-nowrap text-[#8a8a8a]">Set as initiator</div>
          <div className="h-[21px] w-[73px] rounded-[2px] border border-[#aeb0ae] leading-[19px] tracking-[-0.100px] text-[#8a8a8a]">Delete</div>
        </div>
        <div className="w-[1121px] shrink-0">
          <div className="flex">
            <div className="h-[1px] w-[33px] bg-[#6f9cc8]" />
            <div className="h-[1px] flex-1 bg-[#cbcdcb]" />
          </div>
          <div className="h-[69px] border border-t-0 border-[#cfd2cf] text-[10px] text-[#333]">
            <div className="flex h-[13px] items-center border-t border-[#dcdedc] bg-gradient-to-b from-[#e8e9ea] to-[#f2f4f2]">
              <T className="ml-[36px] w-[318px] tracking-[-0.100px]">Name</T>
              <Ic w={7} h={4}><path d="M0 3.500h7Q5 .5 3.500.5T0 3.500Z" fill="#222" /></Ic>
              <T className="ml-[8px] tracking-[-0.100px]">Description</T>
            </div>
            <div className="flex h-[15px] items-center">
              <Ic w={12} h={12}>
                <circle cx="6" cy="6" r="4.900" fill="#fff" stroke="#333" strokeWidth="1.100" />
                <path d="M4.600 3.800v4.400L8 6Z" fill="#222" />
              </Ic>
              <div className="relative ml-[20px] flex h-[14px] w-[334px] items-center border-l border-dotted border-[#888] pt-[1px] pl-[3px]">
                <T className="tracking-[-0.150px]">Employee actor</T>
                <Ic w={10} h={14} className="absolute top-[2px] left-[15px]">
                  <path d="M1 .8v10l2.400-2 1.800 4 1.700-.8-1.800-3.700h3.200Z" fill="#fff" stroke="#222" strokeWidth=".9" />
                </Ic>
              </div>
              <div className="flex h-[14px] items-center border-l border-dotted border-[#777] pt-[1px] pl-[3px]">
                <T>This is an example of actor that is mapped to any ACME users</T>
              </div>
            </div>
          </div>
          <T className="pl-[1px] text-[10px] leading-[13px] tracking-[-0.200px] text-[#4d6780]">
            Note: when no initiator is set, the process can only be started programmatically
          </T>
        </div>
      </div>
    </div>
  );
}

function PropertiesView() {
  return (
    <div className="flex h-[227px] bg-[#d0d0cf] pt-[4px]">
      <div className="w-[15px] shrink-0" />
      <div className="flex min-w-0 flex-1 flex-col border-b border-l border-[#a6a6a6]">
        <ViewTabs />
        <div className="flex h-[21px] shrink-0 items-center border-b border-[#d6d8dc] bg-gradient-to-b from-[#f7f7fa] to-[#e7e9f1] pt-[2px] pl-[2px]">
          <Ic w={12} h={9}><path d="M.7 1.500h10.500v6H.7zM3 1.500v6" fill="#fff" stroke="#777" strokeWidth=".9" /></Ic>
          <T className="ml-[3px] text-[11.500px] font-bold tracking-[-0.050px] text-[#3d546e]">Approval Process</T>
        </div>
        <div className="flex min-h-0 flex-1">
          <div className="flex w-[44px] shrink-0 flex-col text-[10px] text-[#333]">
            <div className="h-[6px] border-r border-[#999] bg-[#cfcfce]" />
            <div className="h-[17px] border-y border-r border-[#999] bg-gradient-to-b from-[#c4c4c3] to-[#b3b3b2] pl-[5px] leading-[15px] tracking-[0px]">Pool</div>
            <div className="h-[17px] bg-white pl-[5px] leading-[16px] font-bold tracking-[-0.100px] text-[#222]">Actors</div>
            <div className="flex-1 border-t border-r border-[#999] bg-[#cfcfce]" />
          </div>
          <ActorsPage />
        </div>
      </div>
    </div>
  );
}

function StatusBar() {
  return (
    <div className="flex h-[19px] items-stretch bg-[#d3d3d2] pl-[951px] text-[10px] text-[#333]">
      <div className="my-[2px] w-[3px] shrink-0 border-l border-dotted border-[#777]" />
      <div className="flex w-[104px] shrink-0 items-center justify-center border-b border-white bg-linear-to-r from-[#a1a19c] from-46% to-[#d9d9d8] to-46% pt-[1px] pl-[1px]">
        239M of 512M
      </div>
      <div className="flex w-[11px] items-center justify-center border-b border-l border-[#bbb] bg-[#e3e6ea]">
        <Ic w={8} h={12}>
          <path d="M1 3.500h6l-.5 8h-5Z" fill="#a9c1e2" stroke="#6d8fc0" strokeWidth=".8" />
          <path d="M.5 2h7" stroke="#6d8fc0" strokeWidth="1.200" />
        </Ic>
      </div>
      <div className="my-[2px] border-l border-dotted border-[#777]" />
    </div>
  );
}

function TaskBar() {
  return (
    <div className="flex h-[23px] items-center border-t border-[#5b7794] bg-[#d3d3d2] text-[10px] text-[#333]">
      <Ic w={16} h={20}>
        <path d="M0 3h9l2 2h4.500v13H0Z" fill="#b3baa0" stroke="#6c7360" />
        <path d="M0 8h13v8H0z" fill="#d8dcc8" stroke="#8a917b" strokeWidth=".7" />
        <path d="M4 10h3q2 2 0 4H4Z" stroke="#8a917b" />
      </Ic>
      <Ic w={7} h={18}><path d="M4.500 5v10" stroke="#b3b3b3" strokeWidth="2" strokeDasharray="2 1.500" /></Ic>
      <div className="flex h-full w-[136px] items-center bg-gradient-to-r from-[#cdcdcc] to-[#b9b9b8] pt-[2px] pl-[4px]">
        <Bonita w={9} h={11} />
        <T className="ml-[6px] tracking-[-0.100px]">Bonita Studio</T>
      </div>
      <Firefox s={11} className="mt-[1px] ml-[3px]" />
      <T className="ml-[5px] pt-[2px] tracking-[-0.050px]">Mozilla Firefox</T>
      <div className="ml-auto flex h-full gap-px bg-[#d9d9d8]">
        <div className="flex w-[43px] items-center justify-center bg-gradient-to-b from-[#86abd8] to-[#566478] pt-[1px]">
          <Bonita w={17} h={19} color="#d3062f" />
        </div>
        <div className="w-[43px] bg-[#8f918f]" />
        <div className="w-[43px] bg-[#8f918f]" />
        <div className="w-[44px] bg-[#8f918f]" />
      </div>
      <Ic w={16} h={21}>
        <path d="M2 5h16l-2 15H4Z" fill="#d4d6d4" stroke="#666" />
        <ellipse cx="10" cy="4.500" rx="8" ry="2.500" fill="#eee" stroke="#555" />
        <path d="M7 10h6v6H7zM5 8l1 10" stroke="#999" />
      </Ic>
    </div>
  );
}

export default function App() {
  return (
    <div className="flex h-[720px] w-[1280px] flex-col overflow-hidden bg-[#d3d3d2] font-['Noto_Sans',sans-serif] leading-normal tracking-[-0.220px]">
      <TopPanel />
      <TitleBar />
      <MenuBar />
      <ToolBar />
      <div className="-mt-[1px]"><EditorTabs /></div>
      <Editor />
      <PropertiesView />
      <StatusBar />
      <TaskBar />
    </div>
  );
}
